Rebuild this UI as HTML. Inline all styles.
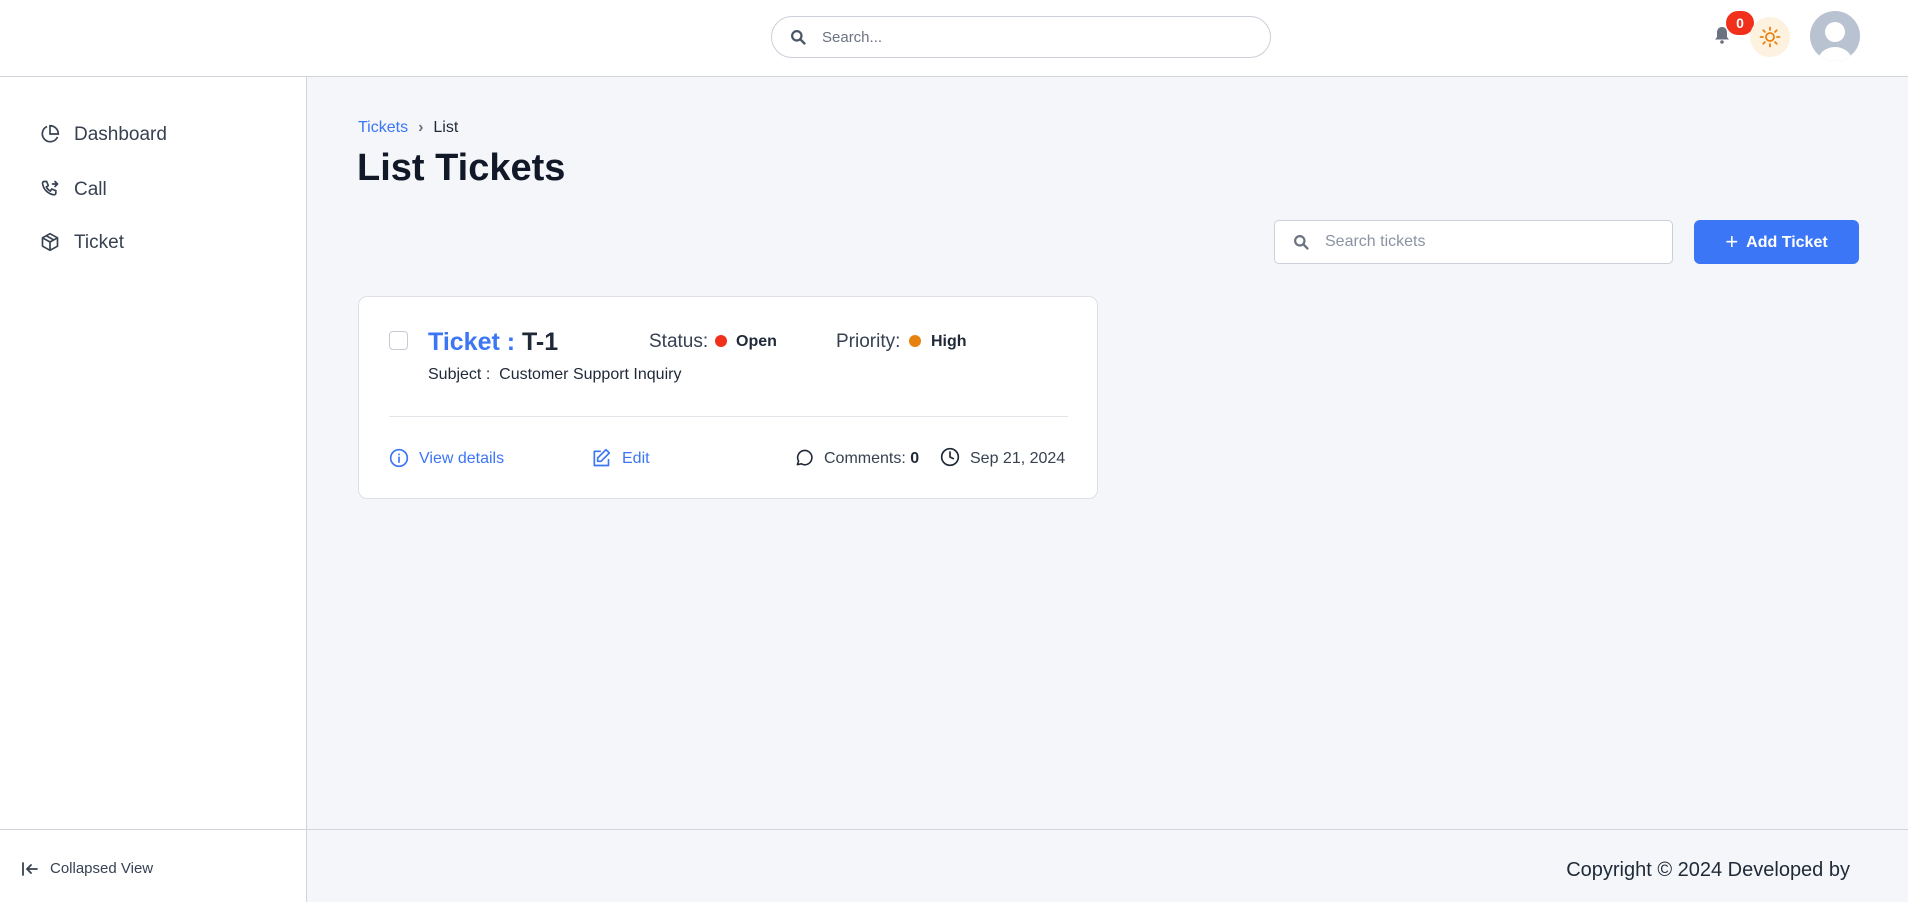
<!DOCTYPE html>
<html><head><meta charset="utf-8"><style>
*{box-sizing:border-box;margin:0;padding:0}
body{width:1908px;height:902px;overflow:hidden;background:#f4f6fa;font-family:"Liberation Sans",sans-serif;color:#111827;position:relative}
.abs{position:absolute}
#hdr{left:0;top:0;width:1908px;height:77px;background:#fff;border-bottom:1px solid #d1d5db}
#side{left:0;top:77px;width:307px;height:825px;background:#fff;border-right:1px solid #d1d5db}
#foot{left:0;top:829px;width:1908px;height:73px;border-top:1px solid #d1d5db;background:#f4f6fa}
#footl{left:0;top:829px;width:307px;height:73px;background:#fff;border-right:1px solid #d1d5db;border-top:1px solid #d1d5db}
.nav{position:absolute;left:40px;font-size:19px;color:#374151;display:flex;align-items:center}
.nav svg{margin-right:14px;margin-top:-2px}
svg{display:block}
</style></head><body>
<div id="hdr" class="abs"></div>
<div class="abs" style="left:771px;top:16px;width:500px;height:42px;border:1px solid #cbd0d8;border-radius:21px;background:#fff"></div>
<svg class="abs" style="left:790px;top:29px" width="17" height="17" viewBox="0 0 20 20"><circle cx="8" cy="8" r="5.5" fill="none" stroke="#4b5563" stroke-width="2.6"/><path d="M12 12l5 5" stroke="#4b5563" stroke-width="2.8" stroke-linecap="round"/></svg>
<div class="abs" style="left:822px;top:29px;font-size:15px;color:#6b7280">Search...</div>
<svg class="abs" style="left:1713px;top:25px" width="18" height="20" viewBox="0 0 18 20"><path d="M9 2c-3 0-5 2.3-5 5.5v4.5l-2 2.5h14l-2-2.5V7.5C14 4.3 12 2 9 2z" fill="#6b7280"/><circle cx="9" cy="17" r="1.8" fill="#6b7280"/></svg>
<div class="abs" style="left:1726px;top:11px;width:28px;height:24px;border-radius:12px;background:#f0301a;color:#fff;font-weight:bold;font-size:14px;text-align:center;line-height:24px">0</div>
<div class="abs" style="left:1750px;top:17px;width:40px;height:40px;border-radius:50%;background:#fdf1df"></div>
<svg class="abs" style="left:1758px;top:25px" width="24" height="24" viewBox="0 0 24 24" fill="none" stroke="#e8820f" stroke-width="1.8" stroke-linecap="round"><circle cx="12" cy="12" r="4"/><path d="M12 2.5v2.5M12 19v2.5M2.5 12H5M19 12h2.5M5.3 5.3l1.6 1.6M17.1 17.1l1.6 1.6M5.3 18.7l1.6-1.6M17.1 6.9l1.6-1.6"/></svg>
<svg class="abs" style="left:1810px;top:11px" width="50" height="50" viewBox="0 0 50 50"><defs><clipPath id="c"><circle cx="25" cy="25" r="25"/></clipPath></defs><circle cx="25" cy="25" r="25" fill="#b8c2d1"/><g clip-path="url(#c)"><circle cx="25" cy="21" r="10" fill="#fff"/><ellipse cx="25" cy="50" rx="17" ry="14" fill="#fff"/></g></svg>

<div id="side" class="abs"></div>
<div class="nav" style="top:124px"><svg width="20" height="20" viewBox="0 0 24 24" fill="none" stroke="#374151" stroke-width="2"><path d="M21 15.5A9.5 9.5 0 1 1 8.5 3"/><path d="M12 2a10 10 0 0 1 10 10H12z"/></svg>Dashboard</div>
<div class="nav" style="top:179px"><svg width="20" height="20" viewBox="0 0 24 24" fill="none" stroke="#374151" stroke-width="2" stroke-linecap="round" stroke-linejoin="round"><path d="M5 3h3l2 5-2.5 1.5a11 11 0 0 0 5 5L14 12l5 2v3a2 2 0 0 1-2 2A16 16 0 0 1 3 5a2 2 0 0 1 2-2z"/><path d="M15 6h6M18 3l3 3-3 3"/></svg>Call</div>
<div class="nav" style="top:232px"><svg width="20" height="20" viewBox="0 0 24 24" fill="none" stroke="#374151" stroke-width="2" stroke-linejoin="round"><path d="M12 2l9 5v10l-9 5-9-5V7z"/><path d="M3 7l9 5 9-5M12 12v10M7.5 4.5l9 5"/></svg>Ticket</div>
<div id="foot" class="abs"></div>
<div id="footl" class="abs"></div>
<svg class="abs" style="left:21px;top:861px" width="18" height="16" viewBox="0 0 18 16" fill="none" stroke="#374151" stroke-width="1.8" stroke-linecap="round"><path d="M2 2v12M16 8H6M10 4L6 8l4 4"/></svg>
<div class="abs" style="left:50px;top:860px;font-size:15px;color:#374151">Collapsed View</div>
<div class="abs" style="right:58px;top:859px;font-size:20px;color:#1f2937">Copyright © 2024 Developed by</div>

<div class="abs" style="left:358px;top:119px;font-size:16px"><span style="color:#3b76f6">Tickets</span><span style="color:#6b7280;margin:0 10px;font-weight:bold">›</span><span style="color:#1f2937">List</span></div>
<div class="abs" style="left:357px;top:147px;font-size:38px;font-weight:bold;color:#111827">List Tickets</div>

<div class="abs" style="left:1274px;top:220px;width:399px;height:44px;border:1px solid #cbd0d8;border-radius:5px;background:#fff"></div>
<svg class="abs" style="left:1293px;top:234px" width="17" height="17" viewBox="0 0 20 20"><circle cx="8" cy="8" r="5.5" fill="none" stroke="#6b7280" stroke-width="2.6"/><path d="M12 12l5 5" stroke="#6b7280" stroke-width="2.8" stroke-linecap="round"/></svg>
<div class="abs" style="left:1325px;top:233px;font-size:16px;color:#8b93a3">Search tickets</div>
<div class="abs" style="left:1694px;top:220px;width:165px;height:44px;border-radius:6px;background:#3b76f6;color:#fff;font-weight:bold;font-size:16px;line-height:44px;text-align:center"><span style="font-size:22px;font-weight:normal;vertical-align:-2px;margin-right:8px">+</span>Add Ticket</div>

<div class="abs" style="left:358px;top:296px;width:740px;height:203px;background:#fff;border:1px solid #dde1e7;border-radius:9px"></div>
<div class="abs" style="left:389px;top:331px;width:19px;height:19px;border:1.5px solid #c6cbd3;border-radius:4px"></div>
<div class="abs" style="left:428px;top:328px;font-size:25px;font-weight:bold"><span style="color:#3b76f6">Ticket :</span> <span style="color:#1f2937">T-1</span></div>
<div class="abs" style="left:649px;top:331px;font-size:19px;color:#374151">Status:</div>
<div class="abs" style="left:715px;top:335px;width:12px;height:12px;border-radius:50%;background:#f0301a"></div>
<div class="abs" style="left:736px;top:333px;font-size:16px;font-weight:bold;color:#1f2937">Open</div>
<div class="abs" style="left:836px;top:331px;font-size:19px;color:#374151">Priority:</div>
<div class="abs" style="left:909px;top:335px;width:12px;height:12px;border-radius:50%;background:#e8820f"></div>
<div class="abs" style="left:931px;top:333px;font-size:16px;font-weight:bold;color:#1f2937">High</div>
<div class="abs" style="left:428px;top:366px;font-size:16px;color:#1f2937">Subject :&nbsp; Customer Support Inquiry</div>
<div class="abs" style="left:389px;top:416px;width:679px;height:1px;background:#e2e5ea"></div>

<svg class="abs" style="left:389px;top:448px" width="20" height="20" viewBox="0 0 24 24" fill="none" stroke="#3b76f6" stroke-width="2" stroke-linecap="round"><circle cx="12" cy="12" r="10"/><path d="M12 11v6M12 7.5v.5"/></svg>
<div class="abs" style="left:419px;top:450px;font-size:16px;color:#3b76f6">View details</div>
<svg class="abs" style="left:591px;top:448px" width="20" height="20" viewBox="0 0 24 24" fill="none" stroke="#3b76f6" stroke-width="2" stroke-linecap="round" stroke-linejoin="round"><path d="M11 4H4v17h17v-7"/><path d="M18 2l4 4-10 10H8v-4z"/></svg>
<div class="abs" style="left:622px;top:450px;font-size:16px;color:#3b76f6">Edit</div>
<svg class="abs" style="left:795px;top:448px" width="19" height="19" viewBox="0 0 24 24" fill="none" stroke="#1f2937" stroke-width="2" stroke-linejoin="round"><path d="M3 21l1.5-4.5A9 9 0 1 1 8 20z"/></svg>
<div class="abs" style="left:824px;top:450px;font-size:16px;color:#374151">Comments: <b style="color:#1f2937">0</b></div>
<svg class="abs" style="left:940px;top:447px" width="20" height="20" viewBox="0 0 24 24" fill="none" stroke="#1f2937" stroke-width="2" stroke-linecap="round"><circle cx="12" cy="12" r="10"/><path d="M12 6v6l4 2"/></svg>
<div class="abs" style="left:970px;top:450px;font-size:16px;color:#374151">Sep 21, 2024</div>
</body></html>
